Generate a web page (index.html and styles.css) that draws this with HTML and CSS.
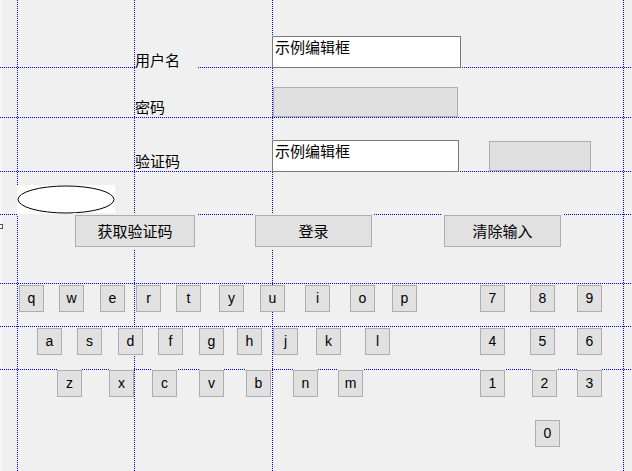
FILE: index.html
```html
<!DOCTYPE html>
<html lang="zh-CN">
<head>
    <meta charset="UTF-8">
    <meta name="viewport" content="width=device-width, initial-scale=1.0">
    <title>登录</title>

    <link rel="stylesheet" href="styles.css">
</head>
<body>
    <div class="form">
        <div class="fields">
            <span class="label label-user">用户名</span>
            <div class="edit edit-user">示例编辑框</div>
            <span class="label label-pass">密码</span>
            <div class="box box-pass"></div>
            <span class="label label-code">验证码</span>
            <div class="edit edit-code">示例编辑框</div>
            <div class="box box-captcha"></div>
        </div>

        <div class="ellipse">
            <svg width="98" height="29" viewBox="0 0 98 29">
                <ellipse cx="49" cy="14.5" rx="48" ry="13.5" fill="#fff" stroke="#000" stroke-width="1"/>
            </svg>
        </div>

        <div class="actions">
            <button class="btn">获取验证码</button>
            <button class="btn">登录</button>
            <button class="btn">清除输入</button>
        </div>

        <div class="keys keys-1">
            <button class="key">q</button>
            <button class="key">w</button>
            <button class="key">e</button>
            <button class="key">r</button>
            <button class="key">t</button>
            <button class="key">y</button>
            <button class="key">u</button>
            <button class="key">i</button>
            <button class="key">o</button>
            <button class="key">p</button>
            <button class="key">7</button>
            <button class="key">8</button>
            <button class="key">9</button>
        </div>
        <div class="keys keys-2">
            <button class="key">a</button>
            <button class="key">s</button>
            <button class="key">d</button>
            <button class="key">f</button>
            <button class="key">g</button>
            <button class="key">h</button>
            <button class="key">j</button>
            <button class="key">k</button>
            <button class="key">l</button>
            <button class="key">4</button>
            <button class="key">5</button>
            <button class="key">6</button>
        </div>
        <div class="keys keys-3">
            <button class="key">z</button>
            <button class="key">x</button>
            <button class="key">c</button>
            <button class="key">v</button>
            <button class="key">b</button>
            <button class="key">n</button>
            <button class="key">m</button>
            <button class="key">1</button>
            <button class="key">2</button>
            <button class="key">3</button>
        </div>
        <div class="keys keys-4">
            <button class="key">0</button>
        </div>

        <span class="handle"></span>
    </div>
</body>
</html>
```

FILE: styles.css
```css
body {
    margin: 0;
    background: #f0f0f0;
}

/* designer canvas with the dotted layout guides */
.form {
    --dot-v: repeating-linear-gradient(to bottom, #0000ff 0 1px, transparent 1px 2px);
    --dot-h: repeating-linear-gradient(to right, #0000ff 0 1px, transparent 1px 2px);
    position: relative;
    width: 632px;
    height: 471px;
    overflow: hidden;
    font-family: "Noto Sans CJK SC", sans-serif;
    font-size: 15px;
    color: #000;
    background-color: #f0f0f0;
    background-image:
        var(--dot-v), var(--dot-v), var(--dot-v), var(--dot-v),
        var(--dot-h), var(--dot-h), var(--dot-h), var(--dot-h),
        var(--dot-h), var(--dot-h), var(--dot-h),
        linear-gradient(#f8f8f8, #f8f8f8);
    background-size:
        1px 100%, 1px 100%, 1px 100%, 1px 100%,
        100% 1px, 100% 1px, 100% 1px, 100% 1px,
        100% 1px, 100% 1px, 100% 1px,
        2px 100%;
    background-repeat: no-repeat;
    background-position:
        17px 0, 134px 0, 272px 0, 623px 0,
        0 67px, 0 117px, 0 171px, 0 214px,
        0 283px, 0 326px, 0 369px,
        0 0;
}

.fields {
    display: grid;
    grid-template-columns: 135px 137px 217px 102px 1fr;
    grid-template-rows: 36px 32px 19px 30px 23px 32px;
}

.label {
    grid-column: 2;
    align-self: end;
    line-height: 18px;
    height: 18px;
}
.label-user {
    grid-row: 2;
    width: 62px;
    margin-bottom: -1px;
    background: #f0f0f0;
}
.label-pass { grid-row: 4; margin-bottom: 1px; }
.label-code { grid-row: 6; margin-bottom: 2px; }

.edit {
    grid-column: 3;
    box-sizing: border-box;
    height: 32px;
    padding: 1px 0 0 2px;
    line-height: 18px;
    background: #fff;
    border: 1px solid #7a7a7a;
}
.edit-user { grid-row: 2; width: 189px; }
.edit-code { grid-row: 6; width: 187px; }

.box {
    box-sizing: border-box;
    height: 30px;
    background: #e0e0e0;
    border: 1px solid #adadad;
}
.box-pass { grid-row: 4; grid-column: 3; width: 185px; margin-left: 1px; }
.box-captcha { grid-row: 6; grid-column: 4; width: 102px; margin-top: 1px; }

.ellipse {
    width: 98px;
    height: 29px;
    margin: 13px 0 0 17px;
    background: #fff;
    box-shadow: 0 1px 0 #f0f0f0;
}
.ellipse svg { display: block; }

.actions {
    display: grid;
    grid-template-columns: 75px 180px 189px 1fr;
    margin-top: 1px;
}
.btn {
    box-sizing: border-box;
    height: 32px;
    padding: 0 0 1px;
    font: inherit;
    color: #000;
    background: #e1e1e1;
    border: 1px solid #adadad;
    box-shadow: 0 0 0 2px #f0f0f0;
}
.btn:nth-child(1) { grid-column: 2; width: 120px; }
.btn:nth-child(2) { grid-column: 3; width: 117px; }
.btn:nth-child(3) { grid-column: 4; width: 117px; }

/* on-screen keyboard */
.keys {
    display: grid;
    height: 27px;
}
.keys-1 {
    margin-top: 38px;
    padding-left: 19px;
    grid-template-columns: 40px 41px 36px 40px 43px 41px 45px 45px 42px 88px 50px 47px 25px;
}
.keys-2 {
    margin-top: 16px;
    padding-left: 37px;
    grid-template-columns: 40px 41px 40px 41px 38px 36px 43px 49px 115px 50px 47px 25px;
}
.keys-3 {
    margin-top: 15px;
    padding-left: 57px;
    grid-template-columns: 52px 43px 47px 47px 47px 45px 142px 52px 45px 25px;
}
.keys-3 .key { box-shadow: 0 -1px 0 #f0f0f0; }
.keys-4 {
    margin-top: 23px;
    padding-left: 535px;
}

.key {
    box-sizing: border-box;
    width: 25px;
    height: 27px;
    padding: 0;
    font-family: "Liberation Sans", Arial, sans-serif;
    font-size: 14px;
    line-height: 25px;
    color: #000;
    background: #e1e1e1;
    border: 1px solid #adadad;
}

.handle {
    position: absolute;
    left: 0;
    top: 224px;
    width: 2px;
    height: 3px;
    border: 1px solid #505050;
    border-left: 0;
}
```
